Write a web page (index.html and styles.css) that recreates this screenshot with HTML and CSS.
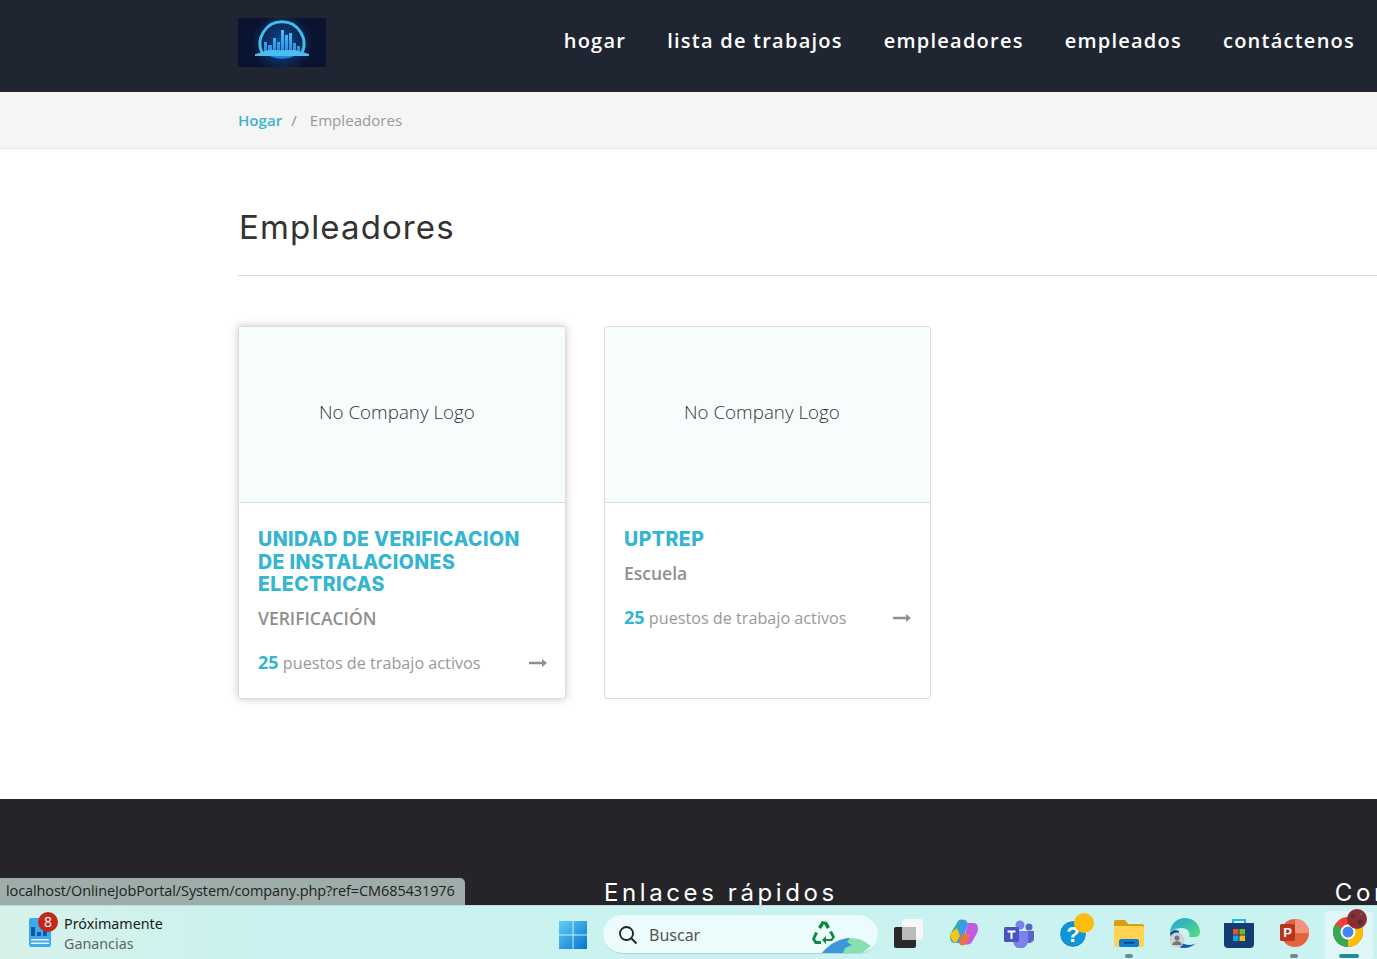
FILE: index.html
```html
<!DOCTYPE html>
<html lang="es">
<head>
<meta charset="utf-8">
<title>Empleadores</title>
<link rel="stylesheet" href="styles.css">
</head>
<body>
<div class="page">
  <header class="topbar">
    <a class="logo" href="#">
      <svg width="88" height="49" viewBox="0 0 88 49">
        <defs>
          <radialGradient id="glow" cx="50%" cy="50%" r="50%"><stop offset="0" stop-color="#124a98"/><stop offset="1" stop-color="#0a1330"/></radialGradient>
          <linearGradient id="towers" x1="0" y1="0" x2="0" y2="1"><stop offset="0" stop-color="#45c8f4"/><stop offset="1" stop-color="#2a86dc"/></linearGradient>
        </defs>
        <rect width="88" height="49" fill="#0a1330"/>
        <circle cx="44" cy="25" r="31" fill="url(#glow)"/>
        <path d="M24 35A22 22 0 1 1 64 35" fill="none" stroke="#3cc0ee" stroke-width="3"/>
        <path d="M33 37a14 6 0 0 0 22 0" fill="none" stroke="#1f86e0" stroke-width="3"/>
        <path d="M26 24h3v11h-3zM30 27h4v8h-4zM35 20h3v15h-3zM39 24h3v11h-3zM43 12h3v23h-3zM47 17h3v18h-3zM51 15h3v20h-3zM55 25h3v10h-3zM59 28h3v7h-3z" fill="url(#towers)"/>
        <path d="M17 36c8-1 11-5 19-4 10 1 20-1 25 1 3 1 7 2 10 3v2H17z" fill="#4cbdf0"/>
      </svg>
    </a>
    <nav class="nav">
      <a href="#">hogar</a>
      <a href="#">lista de trabajos</a>
      <a href="#">empleadores</a>
      <a href="#">empleados</a>
      <a href="#">contáctenos</a>
    </nav>
  </header>

  <div class="crumbs">
    <a href="#">Hogar</a><span class="sep">/</span><span class="current">Empleadores</span>
  </div>

  <main class="main">
    <h1 class="title">Empleadores</h1>
    <div class="cards">
      <article class="card raised">
        <div class="card-img"><span>No Company Logo</span></div>
        <div class="card-body">
          <h2>UNIDAD DE VERIFICACION DE INSTALACIONES ELECTRICAS</h2>
          <p class="kind">VERIFICACIÓN</p>
          <div class="jobs">
            <span><b>25</b> puestos de trabajo activos</span>
            <svg width="18" height="8" viewBox="0 0 18 8"><path d="M0 2.800h13V0l5 4-5 4V5.200H0z" fill="#8f8f8f"/></svg>
          </div>
        </div>
      </article>
      <article class="card">
        <div class="card-img"><span>No Company Logo</span></div>
        <div class="card-body">
          <h2>UPTREP</h2>
          <p class="kind">Escuela</p>
          <div class="jobs">
            <span><b>25</b> puestos de trabajo activos</span>
            <svg width="18" height="8" viewBox="0 0 18 8"><path d="M0 2.800h13V0l5 4-5 4V5.200H0z" fill="#8f8f8f"/></svg>
          </div>
        </div>
      </article>
    </div>
  </main>

  <footer class="footer">
    <h3 class="foot-a">Enlaces rápidos</h3>
    <h3 class="foot-b">Contacto</h3>
  </footer>

  <div class="status">localhost/OnlineJobPortal/System/company.php?ref=CM685431976</div>

  <div class="taskbar">
    <div class="widget">
      <div class="widget-icon">
        <svg width="24" height="34" viewBox="0 0 24 34">
          <rect x="1" y="5" width="22" height="29" rx="2" fill="#3fa9ec"/>
          <path d="M3 14h4v9H3zM9 19h4v4H9zM15 16h4v7h-4z" fill="#0f5aa8"/>
          <path d="M3 26h18v1.500H3zM3 29.500h18V31H3z" fill="#e6f6ff"/>
        </svg>
        <span class="badge">8</span>
      </div>
      <div class="widget-text"><span>Próximamente</span><small>Ganancias</small></div>
    </div>
    <div class="task-center">
      <svg class="start" width="30" height="30" viewBox="0 0 30 30">
        <defs><linearGradient id="win" x1="0" y1="0" x2="1" y2="1"><stop offset="0" stop-color="#5fd0f7"/><stop offset="1" stop-color="#0573d2"/></linearGradient></defs>
        <path d="M1 1h13.500v13.500H1zM15.500 1H29v13.500H15.500zM1 15.500h13.500V29H1zM15.500 15.500H29V29H15.500z" fill="url(#win)"/>
      </svg>
      <div class="search">
        <svg width="20" height="20" viewBox="0 0 20 20"><circle cx="8.500" cy="8.500" r="6.500" fill="none" stroke="#222" stroke-width="1.800"/><path d="M13.500 13.500L18.500 18.500" stroke="#222" stroke-width="2"/></svg>
        <span>Buscar</span>
        <svg class="search-art" width="62" height="34" viewBox="0 0 62 34">
          <path d="M12 2l5 1 3 5-3 2-3-5-3 5-3-2zM22 12l3 6-3 4h-6v3l-4-4 4-4v3h5l1-2-3-5zM5 13l3 1-3 6 2 2h4v3H5l-3-5z" fill="#0b8a43"/>
          <path d="M12 34c8-10 22-17 36-14 6 1 10 5 13 7-4 3-7 6-10 7z" fill="#86e0b0"/>
          <path d="M12 34c8-10 20-15 28-15l-3 4 5 3-7 3-2 5z" fill="#3b96da"/>
        </svg>
      </div>
      <div class="apps">
        <span class="app">
          <svg width="30" height="30" viewBox="0 0 30 30"><rect x="8" y="1" width="21" height="21" rx="2" fill="#f6f8f8"/><rect x="0" y="9" width="22" height="21" rx="2" fill="#2a2a2a"/><rect x="8" y="9" width="14" height="13" fill="#b8bcbc"/></svg>
        </span>
        <span class="app">
          <svg width="30" height="30" viewBox="0 0 30 30"><path d="M9 3c3-2 7-2 9 1l-7 21H6C1 25 0 19 2 15z" fill="#2fb98a"/><path d="M10 3c4-2 8-1 9 3l-6 18-7 1z" fill="#3d9ae8"/><path d="M19 5h5c5 0 6 5 4 10l-5 9c-2 3-6 3-9 2z" fill="#c05be0"/><path d="M10 25l3-9h8l-4 10c-3 2-6 2-7-1z" fill="#f0733f"/><path d="M2 15l6-5 3 8-4 7C3 23 0 19 2 15z" fill="#f5c518"/></svg>
        </span>
        <span class="app">
          <svg width="30" height="30" viewBox="0 0 30 30"><circle cx="25" cy="9" r="3.500" fill="#5a62c4"/><circle cx="16" cy="7" r="4.500" fill="#7b83eb"/><path d="M22 13h8v8a5 5 0 0 1-8 3z" fill="#5a62c4"/><path d="M9 13h15v10a7.500 7.500 0 0 1-15 0z" fill="#7b83eb"/><rect x="0" y="9" width="15" height="15" rx="1.500" fill="#4b53bc"/><path d="M3.500 12.500h8v2h-3V21h-2v-6.500h-3z" fill="#fff"/></svg>
        </span>
        <span class="app lift">
          <svg width="36" height="35" viewBox="0 0 36 35"><circle cx="14" cy="21" r="13.500" fill="#0f95d6" stroke="#fff" stroke-width="1"/><text x="14" y="29" class="help-q">?</text><circle cx="25" cy="10" r="10" fill="#fdbd0f"/></svg>
        </span>
        <span class="app running">
          <svg width="30" height="28" viewBox="0 0 30 28"><path d="M0 3a2 2 0 0 1 2-2h9l3 4h14a2 2 0 0 1 2 2v4H0z" fill="#d79f12"/><path d="M0 7h28a2 2 0 0 1 2 2v17a2 2 0 0 1-2 2H2a2 2 0 0 1-2-2z" fill="#ffd24f"/><rect x="5" y="20" width="20" height="8" rx="2" fill="#0f7ad0"/><rect x="10" y="23" width="10" height="1.500" fill="#0a3f7a"/></svg>
        </span>
        <span class="app">
          <svg width="32" height="32" viewBox="0 0 32 32"><defs><linearGradient id="edge" x1="0" y1="0" x2="1" y2="1"><stop offset="0" stop-color="#1fa5dc"/><stop offset="1" stop-color="#5bdc78"/></linearGradient></defs><path d="M1 15C2 6 9 1 16 1c9 0 15 7 15 14 0 3-2 5-5 5h-6c2-5-2-9-7-9-6 0-11 3-12 4z" fill="url(#edge)"/><path d="M10 18c0 6 4 10 10 10 4 0 7-1 9-4-3 4-8 7-14 7C8 31 2 25 1 16c2-3 6-4 9-2z" fill="#0c5aa8"/><circle cx="8" cy="23" r="7.500" fill="#cfd3d3"/><circle cx="8" cy="21" r="2.500" fill="#757575"/><path d="M3 28c1-3 3-4 5-4s4 1 5 4z" fill="#757575"/></svg>
        </span>
        <span class="app">
          <svg width="30" height="30" viewBox="0 0 30 30"><path d="M9 5V2h12v3" fill="none" stroke="#27b4e8" stroke-width="2"/><path d="M0 5h30v21a4 4 0 0 1-4 4H4a4 4 0 0 1-4-4z" fill="#123e73"/><path d="M9 11h5.500v5.500H9z" fill="#e84f25"/><path d="M15.500 11H21v5.500h-5.500z" fill="#6fbb2e"/><path d="M9 17.500h5.500V23H9z" fill="#1ba1e2"/><path d="M15.500 17.500H21V23h-5.500z" fill="#fdb90f"/></svg>
        </span>
        <span class="app running">
          <svg width="30" height="28" viewBox="0 0 30 28"><circle cx="16" cy="14" r="14" fill="#e3633f"/><path d="M16 0a14 14 0 0 1 14 14H16z" fill="#f4917a"/><rect x="1" y="5" width="15" height="17" rx="1.500" fill="#b9341a"/><text x="8.500" y="18" class="ppt-p">P</text></svg>
        </span>
        <span class="app active">
          <svg width="34" height="38" viewBox="0 0 34 38"><circle cx="15" cy="23" r="15" fill="#eb4335"/><path d="M15 23L28 15.500A15 15 0 0 1 15 38z" fill="#fbbc04"/><path d="M15 23L15 38A15 15 0 0 1 2 15.500z" fill="#34a853"/><circle cx="15" cy="23" r="6.500" fill="#4285f4" stroke="#fff" stroke-width="2"/><circle cx="24" cy="10" r="10" fill="#8e2c33"/><circle cx="20" cy="7" r="2" fill="#3c3c3c"/><circle cx="27" cy="13" r="2.500" fill="#3c3c3c"/><circle cx="28" cy="5" r="1.500" fill="#5c5c5c"/></svg>
        </span>
      </div>
    </div>
  </div>
</div>
</body>
</html>
```

FILE: styles.css
```css
* { box-sizing: border-box; }
html, body { margin: 0; height: 100%; overflow: hidden; }
body { font-family: "Open Sans", sans-serif; color: #8f8f8f; background: #fff; }
a { text-decoration: none; color: inherit; }
.page { position: relative; height: 959px; overflow: hidden; }

.topbar { height: 92px; background: #1f2631; display: flex; align-items: flex-start; padding: 18px 0 0 238px; }
.logo { display: block; width: 88px; height: 49px; }
.logo svg { display: block; }
.nav { margin-left: auto; display: flex; gap: 41px; padding: 8px 22px 0 0; font-size: 20px; font-weight: 600; letter-spacing: 1.240px; line-height: 30px; color: #fff; }

.crumbs { height: 57px; background: #f5f5f5; border-bottom: 1px solid #e6e6e6; padding: 18px 0 0 238px; font-size: 15.100px; line-height: 21px; }
.crumbs a { color: #3bb4d0; font-weight: 600; }
.sep { margin: 0 13px 0 9px; color: #8f8f8f; }
.current { color: #999; }

.main { height: 650px; padding: 56px 0 0 238px; }
.title { margin: 0; height: 71px; border-bottom: 1px solid #d8d8d8; font-family: Inter, sans-serif; font-weight: 400; font-size: 33px; line-height: 44px; color: #333; padding-left: 1px; letter-spacing: 1.100px; }
.cards { display: flex; gap: 38px; margin-top: 50px; }
.card { width: 327px; height: 373px; border: 1px solid #dcdcdc; border-radius: 3px; background: #fff; }
.card.raised { width: 328px; box-shadow: 0 0 8px rgba(0,0,0,.22); }
.card.raised .card-body { padding-right: 18px; }
.card.raised .card-img { padding-left: 80px; }
.card-img { height: 176px; background: #f7fdfd; border-bottom: 1px solid #dcdcdc; padding: 72px 0 0 79px; font-size: 18.800px; font-weight: 300; line-height: 26px; color: #333; border-radius: 3px 3px 0 0; }
.card-body { padding: 25px 19px 0; }
.card-body h2 { margin: 0; max-width: 280px; font-family: Inter, sans-serif; font-weight: 800; font-size: 19.500px; line-height: 22.500px; color: #35b5cf; letter-spacing: .45px; }
.kind { margin: 10px 0 0; font-size: 17.500px; line-height: 24px; font-weight: 600; color: #8f8f8f; }
.jobs { display: flex; justify-content: space-between; align-items: center; margin-top: 20px; font-size: 16.200px; line-height: 24px; color: #999; }
.jobs svg { margin-top: 1px; }
.jobs b { font-size: 18px; font-weight: 700; color: #35b5cf; }

.footer { position: relative; height: 160px; background: #242429; display: flex; padding: 80px 0 0 604px; }
.footer h3 { margin: 0; font-family: Inter, sans-serif; font-weight: 400; font-size: 24px; line-height: 28px; letter-spacing: 3.600px; color: #fff; white-space: nowrap; }
.foot-b { margin-left: 497px !important; }

.status { position: absolute; left: 0; bottom: 54px; width: 465px; height: 27px; padding: 3px 0 0 6px; background: #9fadaa; border-top-right-radius: 5px; color: #1d2222; font-size: 14.500px; line-height: 20px; white-space: nowrap; letter-spacing: -.1px; }

.taskbar { position: absolute; left: 0; right: 0; bottom: 0; height: 54px; background: linear-gradient(90deg, #d6f2ea 0, #caf2f0 20%, #c9f2f1 100%); display: flex; border-top: 1px solid #b9dedd; }
.widget { width: 558px; flex: none; display: flex; gap: 12px; padding: 7px 0 0 28px; }
.widget-icon { position: relative; width: 24px; height: 34px; }
.badge { position: absolute; left: 10px; top: -1px; width: 20px; height: 20px; border-radius: 50%; background: #c4281c; color: #fff; font-size: 14px; line-height: 20px; text-align: center; }
.widget-text { display: flex; flex-direction: column; margin-top: 1px; font-family: "Noto Sans", sans-serif; font-size: 14.300px; line-height: 20px; color: #1b1b1b; }
.widget-text small { font-size: 14.300px; color: #5c6566; }
.task-center { display: flex; align-items: flex-start; }
.start { margin-top: 14px; }
.search { display: flex; align-items: center; width: 275px; height: 39px; margin: 9px 0 0 15px; padding: 1px 0 0 15px; border-radius: 20px; background: #ecfbfb; border-bottom: 1px solid #b3d4d4; position: relative; font-family: "Noto Sans", sans-serif; font-size: 16px; color: #555; }
.search > span { margin-left: 11px; }
.search-art { position: absolute; right: 6px; bottom: 0; }
.apps { display: flex; align-items: flex-start; margin-left: 16px; width: 500px; }
.app { position: relative; width: 55px; height: 54px; display: flex; align-items: center; justify-content: flex-start; }
.app.lift svg { margin-top: -6px; }
.app.running::after { content: ""; position: absolute; left: 11px; top: 48px; width: 8px; height: 4px; border-radius: 2px; background: #6f8a8b; }
.app.active { background: #dff8f7; border-radius: 5px; height: 49px; margin: 5px 0 0 -9px; padding-left: 8px; width: 48px; align-items: flex-start; }
.app.active svg { margin-top: -2px; }
.app.active::after { content: ""; position: absolute; left: 14px; top: 43px; width: 20px; height: 4px; border-radius: 2px; background: #258a96; }
.help-q { font-family: "Liberation Sans", sans-serif; font-size: 22px; font-weight: 700; fill: #fff; text-anchor: middle; }
.ppt-p { font-family: "Liberation Sans", sans-serif; font-size: 13px; font-weight: 700; fill: #fff; text-anchor: middle; }
```
